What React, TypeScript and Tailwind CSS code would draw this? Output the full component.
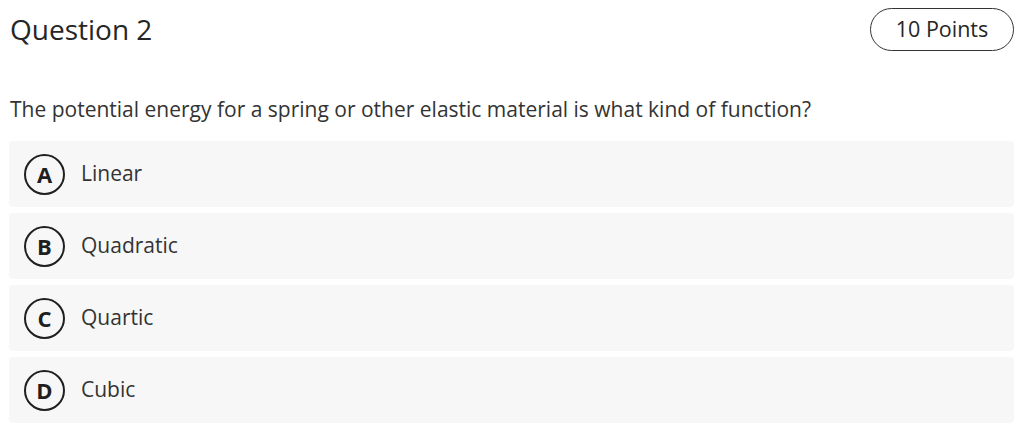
const options = [
  { key: "A", label: "Linear" },
  { key: "B", label: "Quadratic" },
  { key: "C", label: "Quartic" },
  { key: "D", label: "Cubic" },
];

export default function App() {
  return (
    <div className="w-[1027px] h-[439px] bg-white pl-[9px] pr-[13px] text-[#262626] font-['Open_Sans',sans-serif]">
      <div className="flex items-start justify-between pt-[8px]">
        <h1 className="pl-px pt-[2px] text-[28px] leading-[38px] text-[#262626]">Question 2</h1>
        <div className="flex h-[43px] w-[144px] items-center justify-center rounded-full border border-[#333] text-[21.5px] text-[#262626]">
          10 Points
        </div>
      </div>
      <p className="mt-[44px] pl-px text-[21px] leading-[28px] text-[#333]">
        The potential energy for a spring or other elastic material is what kind of function?
      </p>
      <div className="mt-[18px] flex flex-col gap-[6px]">
        {options.map((o) => (
          <div key={o.key} className="flex h-[66px] items-center rounded-[4px] bg-[#f7f7f7] pl-[15px]">
            <span className="flex h-[41px] w-[41px] items-center justify-center rounded-full border-[2.5px] border-[#1f1f1f] text-[22px] font-bold text-[#1f1f1f]">
              {o.key}
            </span>
            <span className="ml-[16px] text-[21px] text-[#333]">{o.label}</span>
          </div>
        ))}
      </div>
    </div>
  );
}
